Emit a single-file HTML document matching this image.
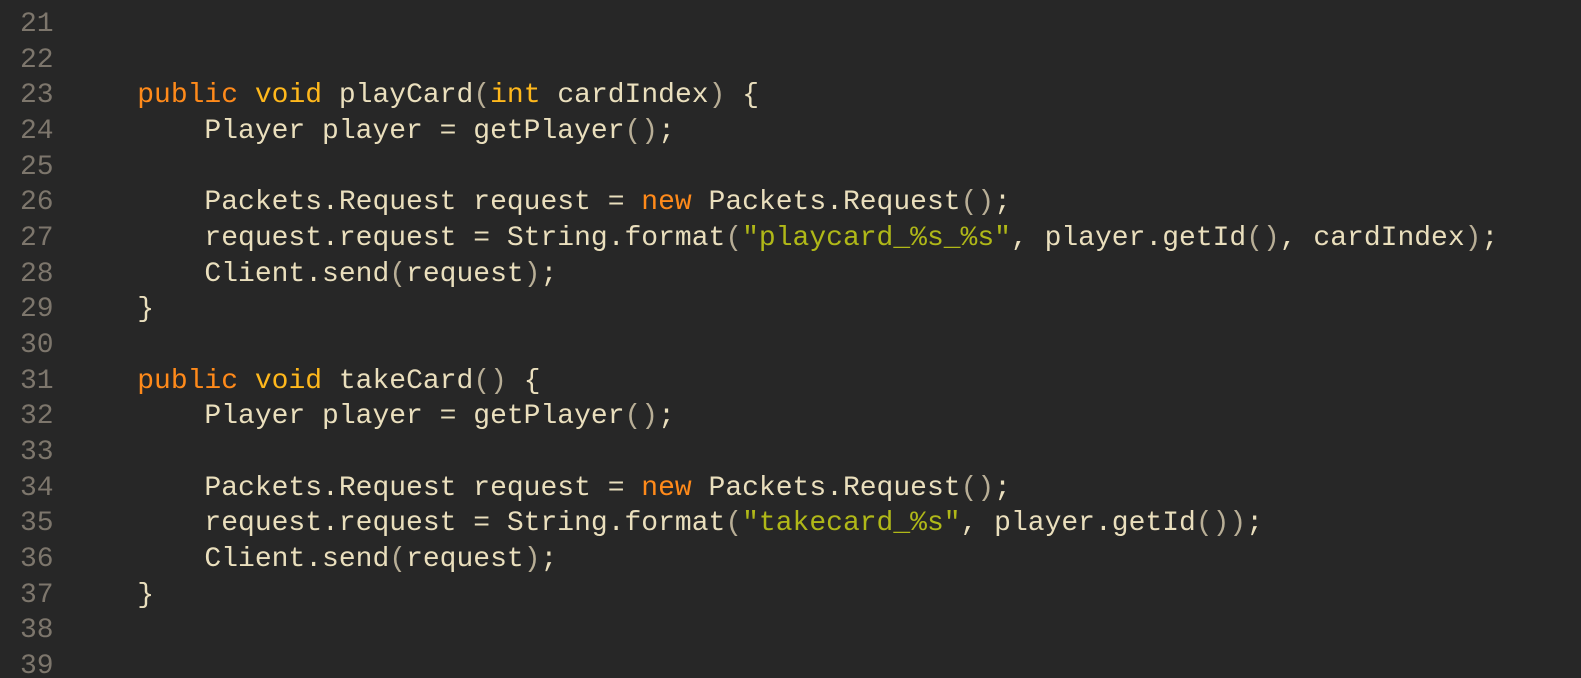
<!DOCTYPE html>
<html><head><meta charset="utf-8"><style>
html,body{margin:0;padding:0;background:#272727;width:1581px;height:678px;overflow:hidden}
.wrap{position:relative;font-family:"Liberation Mono","DejaVu Sans Mono",monospace;font-size:28px;line-height:35.67px;}
.ln{position:absolute;left:20px;top:7px;color:#7d766c;white-space:pre;margin:0;font:inherit}
.code{position:absolute;left:70px;top:7px;color:#eadfbd;white-space:pre;margin:0;font:inherit}
.k{color:#ff8a1a}.t{color:#ffb81c}.p{color:#b8ae96}.s{color:#b0b818}
</style></head><body><div class="wrap">
<pre class="ln">21
22
23
24
25
26
27
28
29
30
31
32
33
34
35
36
37
38
39</pre>
<pre class="code">


    <span class="k">public</span> <span class="t">void</span> playCard<span class="p">(</span><span class="t">int</span> cardIndex<span class="p">)</span> {
        Player player = getPlayer<span class="p">()</span>;

        Packets.Request request = <span class="k">new</span> Packets.Request<span class="p">()</span>;
        request.request = String.format<span class="p">(</span><span class="s">"playcard_%s_%s"</span>, player.getId<span class="p">()</span>, cardIndex<span class="p">)</span>;
        Client.send<span class="p">(</span>request<span class="p">)</span>;
    }

    <span class="k">public</span> <span class="t">void</span> takeCard<span class="p">()</span> {
        Player player = getPlayer<span class="p">()</span>;

        Packets.Request request = <span class="k">new</span> Packets.Request<span class="p">()</span>;
        request.request = String.format<span class="p">(</span><span class="s">"takecard_%s"</span>, player.getId<span class="p">())</span>;
        Client.send<span class="p">(</span>request<span class="p">)</span>;
    }

</pre>
</div></body></html>
